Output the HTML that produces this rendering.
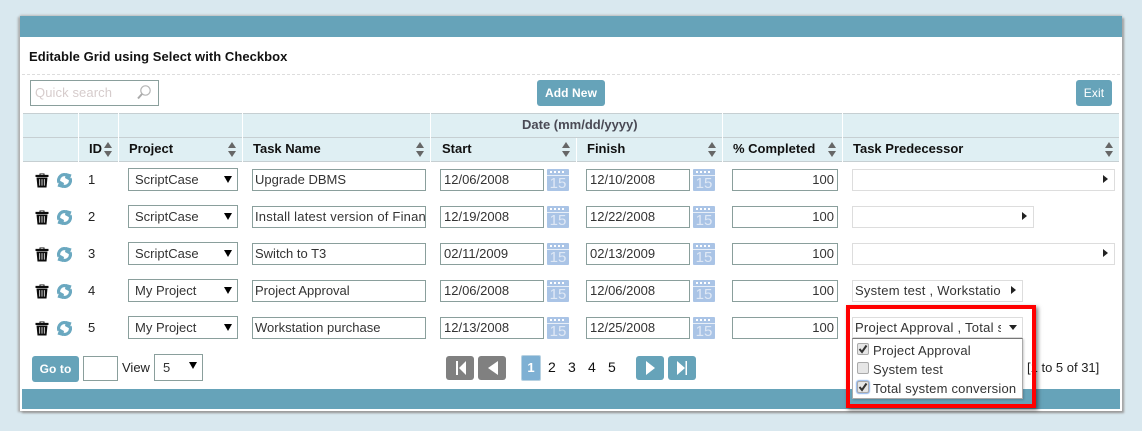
<!DOCTYPE html>
<html><head><meta charset="utf-8">
<style>
html,body{margin:0;padding:0;width:1142px;height:431px;overflow:hidden;background:#d9e8ef;font-family:"Liberation Sans",Arial,sans-serif;font-size:13px;color:#000}
div,span{position:absolute;box-sizing:border-box;white-space:nowrap}
svg{position:absolute;display:block}
.panel{left:20px;top:16px;width:1102px;height:395px;background:#fff;box-shadow:0 -1px 2px #bbb,2px 2px 2px #999,-2px 1px 2px #aaa}
.bar{background:#66a3b9}
.btn{background:#66a3b9;color:#fff;font-weight:bold;font-size:12px;border-radius:3px;text-align:center;letter-spacing:.1px}
.th{background:#dfeff3}
.hl{left:23px;width:1096px;height:1px;background:#c6cfd2}
.vl{width:1px;background:#fff}
.h{top:141px;height:16px;line-height:16px;font-weight:bold;font-size:13px;color:#111}
.sort{top:142px;width:8px;height:15px}
.sort i{position:absolute;left:0;width:0;height:0;border-left:4px solid transparent;border-right:4px solid transparent}
.sort i:first-child{top:0;border-bottom:6px solid #666}
.sort i:last-child{top:9px;border-top:6px solid #666}
.row{left:0;width:1142px;height:24px}
.in{border:1px solid #8a9f9c;background:#fff;height:22px;line-height:20px;top:1px;padding:0 2px;overflow:hidden;font-size:13px;color:#333}
.d{padding-left:3px}
.sel{border:1px solid #8a9f9c;background:#fff;height:23px;line-height:21px;left:128px;width:110px;top:0;padding-left:6px;font-size:13px;color:#333}
.sel:after{content:"";position:absolute;right:5px;top:7px;border-left:4px solid transparent;border-right:4px solid transparent;border-top:7px solid #000}
.id{left:88px;top:4px;line-height:16px;font-size:13px;color:#222}
.pre{left:852px;top:1px;height:22px;border:1px solid #ddd;background:#fff;line-height:20px;padding-left:3px;color:#333;font-size:13px;letter-spacing:.25px;overflow:hidden}
.pre:after{content:"";position:absolute;right:6px;top:5px;border-top:4.500px solid transparent;border-bottom:4.500px solid transparent;border-left:5px solid #222}
.num{left:732px;width:106px;text-align:right;padding-right:3px}
.cal{top:1px;width:22px;height:22px;background:#aac4e6;border-radius:1px}
.cal b{position:absolute;left:0;top:6px;width:22px;height:1px;background:#e8eff8}
.cal em{position:absolute;left:3px;top:2px;width:16px;height:2px;background:repeating-linear-gradient(90deg,#fff 0 2px,#aac4e6 2px 4px)}
.cal span{left:0;top:7px;width:22px;text-align:center;font-size:15px;line-height:15px;color:#dfe8f5}
.pb{top:356px;width:28px;height:24px;border-radius:3px}
.pg{top:358px;line-height:18px;font-size:14px;color:#111}
.cb{left:857px;width:12px;height:12px;border:1px solid #aaa;border-radius:2px;background:#e6e6e6}
.lb{left:873px;line-height:16px;font-size:13px;color:#333;letter-spacing:.2px}
</style></head><body>
<svg width="0" height="0" style="left:0;top:0">
<symbol id="tr" viewBox="0 0 14 16" preserveAspectRatio="none"><path d="M4.500 2V.5H9.500V2H13.500V4.200H.5V2ZM5.500 1.300V2H8.500V1.300ZM1.500 4.800H12.500L11.500 15.500H2.500Z" fill="#0c0c0c" fill-rule="evenodd"/><path d="M4.700 6.500V13.500M7 6.500V13.500M9.300 6.500V13.500" stroke="#fff" stroke-width=".8"/></symbol>
<symbol id="rf" viewBox="0 0 15 15"><g fill="none" stroke="#6aa8c0" stroke-width="3.200"><path d="M2 9.600A5.800 5.800 0 0 1 10.300 2.400"/><path d="M13 5.400A5.800 5.800 0 0 1 4.700 12.600"/></g><path d="M9 0L14.500 1.500L12.500 7.500L8 5ZM6 15L.5 13.500L2.500 7.500L7 10Z" fill="#6aa8c0"/></symbol>
</svg>
<div class="panel"></div>
<div class="bar" style="left:20px;top:16px;width:1102px;height:21px"></div>
<div style="left:29px;top:49px;line-height:16px;font-weight:bold;font-size:13px;letter-spacing:.05px;color:#111">Editable Grid using Select with Checkbox</div>
<div style="left:22px;top:74px;width:1098px;border-top:1px dashed #ddd"></div>

<div style="left:30px;top:80px;width:129px;height:26px;border:1px solid #8a9f9c"></div>
<div style="left:35px;top:85px;line-height:16px;font-size:13px;letter-spacing:.1px;color:#d6cccc">Quick search</div>
<svg style="left:136px;top:84px" width="16" height="16" viewBox="0 0 16 16"><circle cx="9.500" cy="6.500" r="4.700" fill="none" stroke="#b5b5b5" stroke-width="1.200"/><path d="M6 10L2 14.500" stroke="#aaa" stroke-width="2"/></svg>
<div class="btn" style="left:537px;top:80px;width:68px;height:26px;line-height:26px">Add New</div>
<div class="btn" style="left:1076px;top:80px;width:36px;height:26px;line-height:26px;font-weight:normal">Exit</div>

<div class="th" style="left:23px;top:113px;width:1096px;height:49px"></div>
<div class="hl" style="top:113px"></div><div class="hl" style="top:137px"></div><div class="hl" style="top:161px"></div>
<div class="vl" style="left:78px;top:113px;height:49px"></div>
<div class="vl" style="left:118px;top:113px;height:49px"></div>
<div class="vl" style="left:242px;top:113px;height:49px"></div>
<div class="vl" style="left:430px;top:113px;height:49px"></div>
<div class="vl" style="left:576px;top:138px;height:24px"></div>
<div class="vl" style="left:722px;top:113px;height:49px"></div>
<div class="vl" style="left:842px;top:113px;height:49px"></div>
<div style="left:522px;top:117px;line-height:16px;font-weight:bold;font-size:13px;color:#4a4a55">Date (mm/dd/yyyy)</div>
<div class="h" style="left:89px">ID</div>
<div class="h" style="left:129px">Project</div>
<div class="h" style="left:253px">Task Name</div>
<div class="h" style="left:442px">Start</div>
<div class="h" style="left:587px">Finish</div>
<div class="h" style="left:733px">% Completed</div>
<div class="h" style="left:853px">Task Predecessor</div>
<div class="sort" style="left:104px"><i></i><i></i></div>
<div class="sort" style="left:228px"><i></i><i></i></div>
<div class="sort" style="left:416px"><i></i><i></i></div>
<div class="sort" style="left:562px"><i></i><i></i></div>
<div class="sort" style="left:708px"><i></i><i></i></div>
<div class="sort" style="left:828px"><i></i><i></i></div>
<div class="sort" style="left:1105px"><i></i><i></i></div>

<div class="row" style="top:168px">
<svg style="left:35px;top:5px" width="14" height="15"><use href="#tr"/></svg>
<svg style="left:57px;top:5px" width="15" height="15"><use href="#rf"/></svg>
<div class="id">1</div><div class="sel">ScriptCase</div>
<div class="in" style="left:252px;width:174px">Upgrade DBMS</div>
<div class="in d" style="left:440px;width:104px">12/06/2008</div>
<div class="cal" style="left:547px"><em></em><b></b><span>15</span></div>
<div class="in d" style="left:586px;width:104px">12/10/2008</div>
<div class="cal" style="left:693px"><em></em><b></b><span>15</span></div>
<div class="in num">100</div>
<div class="pre" style="width:263px"></div>
</div>

<div class="row" style="top:205px">
<svg style="left:35px;top:5px" width="14" height="15"><use href="#tr"/></svg>
<svg style="left:57px;top:5px" width="15" height="15"><use href="#rf"/></svg>
<div class="id">2</div><div class="sel">ScriptCase</div>
<div class="in" style="left:252px;width:174px;letter-spacing:.2px">Install latest version of Finance</div>
<div class="in d" style="left:440px;width:104px">12/19/2008</div>
<div class="cal" style="left:547px"><em></em><b></b><span>15</span></div>
<div class="in d" style="left:586px;width:104px">12/22/2008</div>
<div class="cal" style="left:693px"><em></em><b></b><span>15</span></div>
<div class="in num">100</div>
<div class="pre" style="width:182px"></div>
</div>

<div class="row" style="top:242px">
<svg style="left:35px;top:5px" width="14" height="15"><use href="#tr"/></svg>
<svg style="left:57px;top:5px" width="15" height="15"><use href="#rf"/></svg>
<div class="id">3</div><div class="sel">ScriptCase</div>
<div class="in" style="left:252px;width:174px">Switch to T3</div>
<div class="in d" style="left:440px;width:104px">02/11/2009</div>
<div class="cal" style="left:547px"><em></em><b></b><span>15</span></div>
<div class="in d" style="left:586px;width:104px">02/13/2009</div>
<div class="cal" style="left:693px"><em></em><b></b><span>15</span></div>
<div class="in num">100</div>
<div class="pre" style="width:263px"></div>
</div>

<div class="row" style="top:279px">
<svg style="left:35px;top:5px" width="14" height="15"><use href="#tr"/></svg>
<svg style="left:57px;top:5px" width="15" height="15"><use href="#rf"/></svg>
<div class="id">4</div><div class="sel">My Project</div>
<div class="in" style="left:252px;width:174px">Project Approval</div>
<div class="in d" style="left:440px;width:104px">12/06/2008</div>
<div class="cal" style="left:547px"><em></em><b></b><span>15</span></div>
<div class="in d" style="left:586px;width:104px">12/06/2008</div>
<div class="cal" style="left:693px"><em></em><b></b><span>15</span></div>
<div class="in num">100</div>
<div class="pre" style="width:171px"><span style="left:2px;top:0;width:146px;overflow:hidden;line-height:20px">System test , Workstation purchase</span></div>
</div>

<div class="row" style="top:316px">
<svg style="left:35px;top:5px" width="14" height="15"><use href="#tr"/></svg>
<svg style="left:57px;top:5px" width="15" height="15"><use href="#rf"/></svg>
<div class="id">5</div><div class="sel">My Project</div>
<div class="in" style="left:252px;width:174px">Workstation purchase</div>
<div class="in d" style="left:440px;width:104px">12/13/2008</div>
<div class="cal" style="left:547px"><em></em><b></b><span>15</span></div>
<div class="in d" style="left:586px;width:104px">12/25/2008</div>
<div class="cal" style="left:693px"><em></em><b></b><span>15</span></div>
<div class="in num">100</div>
</div>

<div class="btn" style="left:32px;top:356px;width:47px;height:26px;line-height:26px">Go to</div>
<div style="left:83px;top:356px;width:35px;height:25px;border:1px solid #8a9f9c"></div>
<div style="left:122px;top:360px;line-height:16px;font-size:13px;color:#222">View</div>
<div class="sel" style="left:154px;top:354px;width:49px;height:27px;line-height:25px"><span style="left:8px;top:0">5</span></div>

<div class="pb" style="left:446px;background:#808080"><svg width="28" height="24" style="left:0;top:0"><path d="M10 5H12V19H10ZM20 5V19L13 12Z" fill="#fff"/></svg></div>
<div class="pb" style="left:478px;background:#808080"><svg width="28" height="24" style="left:0;top:0"><path d="M20 5V19L10 12Z" fill="#fff"/></svg></div>
<div style="left:521px;top:355px;width:20px;height:26px;background:#7eb0d3;border:1px solid #b8d2e2;border-radius:2px;color:#fff;font-weight:bold;font-size:13px;line-height:24px;text-align:center">1</div>
<div class="pg" style="left:548px">2</div><div class="pg" style="left:568px">3</div><div class="pg" style="left:588px">4</div><div class="pg" style="left:608px">5</div>
<div class="pb" style="left:636px;background:#66a3b9"><svg width="28" height="24" style="left:0;top:0"><path d="M10 5V19L19 12Z" fill="#fff"/></svg></div>
<div class="pb" style="left:668px;background:#66a3b9"><svg width="28" height="24" style="left:0;top:0"><path d="M9 5V19L17 12ZM17.500 5H19V19H17.500Z" fill="#fff"/></svg></div>
<div style="left:1027px;top:360px;line-height:16px;font-size:13px;color:#222">[1 to 5 of 31]</div>

<div class="bar" style="left:22px;top:389px;width:1098px;height:20px"></div>

<div style="left:846px;top:305px;width:190px;height:103px;border:4px solid #f00;box-shadow:2px 2px 4px rgba(0,0,0,.5)"></div>
<div style="left:852px;top:317px;width:171px;height:21px;background:#fff;border:1px solid #ddd;overflow:hidden"><span style="left:2px;top:0;width:146px;overflow:hidden;line-height:19px;color:#333;letter-spacing:.25px">Project Approval , Total system conversion</span></div>
<div style="left:1009px;top:325px;border-left:4px solid transparent;border-right:4px solid transparent;border-top:5px solid #222"></div>
<div style="left:852px;top:338px;width:171px;height:61px;background:#fff;border:1px solid #aaa;border-top:1px solid #777;box-shadow:1px 1px 2px rgba(0,0,0,.2)"></div>
<div class="cb" style="top:343px"><svg width="10" height="10" style="left:0;top:0"><path d="M1.500 5L4 8L8.500 1.500" fill="none" stroke="#333" stroke-width="2"/></svg></div>
<div class="lb" style="top:343px">Project Approval</div>
<div class="cb" style="top:362px"></div>
<div class="lb" style="top:362px">System test</div>
<div class="cb" style="top:381px;box-shadow:0 0 1px 1px #8fb5ee"><svg width="10" height="10" style="left:0;top:0"><path d="M1.500 5L4 8L8.500 1.500" fill="none" stroke="#333" stroke-width="2"/></svg></div>
<div class="lb" style="top:381px">Total system conversion</div>
</body></html>
